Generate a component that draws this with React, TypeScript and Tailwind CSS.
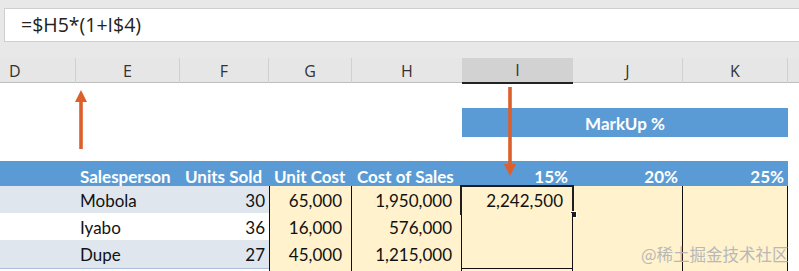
import React from "react";

const G = "grid grid-cols-[76px_104px_89px_83px_110px_111px_110px_105px_1fr]";

function DataRow({
  name,
  units,
  cost,
  sales,
  first,
  shade,
  h,
}: {
  name: string;
  units: string;
  cost: string;
  sales: string;
  first?: boolean;
  shade: boolean;
  h: string;
}) {
  const left = shade ? "bg-[#dfe6ee]" : "bg-white";
  const lb = "border-b border-[#aabfd5]";
  const yc = "bg-[#fff2cc] border-b border-r border-[#111]";
  return (
    <div className={`${G} ${h}`}>
      <div className={`${left} ${lb}`} />
      <div className={`${left} ${lb} flex items-center pl-[4px] pt-[2px]`}>{name}</div>
      <div className={`${left} ${lb} flex items-center justify-end pr-[4px] pt-[2px]`}>{units}</div>
      <div className={`${yc} border-l flex items-center justify-end pr-[9px] pt-[2px]`}>{cost}</div>
      <div className={`${yc} flex items-center justify-end pr-[9px] pt-[2px]`}>{sales}</div>
      <div className={`${yc} relative flex items-center justify-end pr-[9px] pt-[2px]`}>
        {first && (
          <>
            <span>2,242,500</span>
            <div className="absolute left-[-2px] top-[-1px] right-[-2px] bottom-[-1px] border-2 border-[#1e1e1e]" />
            <div className="absolute right-[-5px] bottom-[-4px] w-[7px] h-[7px] bg-[#1e1e1e] border border-white" />
          </>
        )}
      </div>
      <div className={yc} />
      <div className={yc} />
      <div className="bg-white" />
    </div>
  );
}

export default function App() {
  return (
    <div className="relative w-[799px] h-[271px] overflow-hidden bg-white text-[#111] font-['Lato',sans-serif] text-[17px]">
      {/* formula bar */}
      <div className="h-[58px] bg-[#e8e8e8] pt-[8px] pl-[4px]">
        <div className="h-[34px] bg-white border border-r-0 border-[#cfcfcf] flex items-center pl-[16px] text-[19.5px] text-[#222] font-['Open_Sans',sans-serif]">
          =$H5*(1+I$4)
        </div>
      </div>
      {/* column headers */}
      <div className={`${G} h-[25px] bg-[#e6e6e6] border-b border-[#bdbdbd] text-[16px] text-[#333] font-['Open_Sans',sans-serif]`}>
        <div className="border-r border-[#d0d0d0] flex items-center pl-[9px]">D</div>
        <div className="border-r border-[#d0d0d0] flex items-center justify-center">E</div>
        <div className="border-r border-[#d0d0d0] flex items-center justify-center">F</div>
        <div className="border-r border-[#d0d0d0] flex items-center justify-center">G</div>
        <div className="flex items-center justify-center">H</div>
        <div className="bg-[#d2d2d2] border-b-2 border-[#222] mb-[-1px] flex items-center justify-center">I</div>
        <div className="border-r border-[#d0d0d0] flex items-center justify-center">J</div>
        <div className="border-r border-[#d0d0d0] flex items-center justify-center">K</div>
        <div />
      </div>
      <div className="h-[25px]" />
      {/* markup band */}
      <div className={`${G} h-[27px]`}>
        <div className="col-start-6 col-span-3 bg-[#5b9bd5] text-white font-bold flex items-center justify-center pt-[3px]">
          MarkUp %
        </div>
      </div>
      <div className="h-[26px]" />
      {/* table header */}
      <div className={`${G} h-[25px] text-white font-bold`}>
        <div className="bg-[#5b9bd5]" />
        <div className="bg-[#5b9bd5] flex items-center pl-[4px] pt-[3px] whitespace-nowrap">Salesperson</div>
        <div className="bg-[#5b9bd5] flex items-center pl-[5px] pt-[3px] whitespace-nowrap">Units Sold</div>
        <div className="bg-[#5b9bd5] flex items-center pl-[5px] pt-[3px] whitespace-nowrap">Unit Cost</div>
        <div className="bg-[#5b9bd5] flex items-center pl-[5px] pt-[3px] whitespace-nowrap">Cost of Sales</div>
        <div className="bg-[#5b9bd5] flex items-center justify-end pr-[5px] pt-[3px]">15%</div>
        <div className="bg-[#5b9bd5] flex items-center justify-end pr-[5px] pt-[3px]">20%</div>
        <div className="bg-[#5b9bd5] flex items-center justify-end pr-[4px] pt-[3px]">25%</div>
        <div />
      </div>
      <DataRow name="Mobola" units="30" cost="65,000" sales="1,950,000" first shade h="h-[27px]" />
      <DataRow name="Iyabo" units="36" cost="16,000" sales="576,000" shade={false} h="h-[27px]" />
      <DataRow name="Dupe" units="27" cost="45,000" sales="1,215,000" shade h="h-[26px]" />
      <div className={`${G} h-[10px]`}>
        <div />
        <div />
        <div />
        <div className="bg-[#fff2cc] border-l border-r border-[#111]" />
        <div className="bg-[#fff2cc] border-r border-[#111]" />
        <div className="bg-[#fff2cc] border-r border-[#111]" />
        <div className="bg-[#fff2cc] border-r border-[#111]" />
        <div className="bg-[#fff2cc] border-r border-[#111]" />
        <div />
      </div>

      {/* up arrow */}
      <svg className="absolute left-[74px] top-[90px]" width="14" height="60" viewBox="0 0 14 60">
        <polygon points="7,0 13,12 1,12" fill="#dd5f2c" />
        <rect x="5.2" y="10" width="3.6" height="49" fill="#dd5f2c" />
      </svg>
      {/* down arrow */}
      <svg className="absolute left-[503px] top-[87px]" width="14" height="90" viewBox="0 0 14 90">
        <rect x="5.2" y="0" width="3.6" height="80" fill="#dd5f2c" />
        <polygon points="1,77 13,77 7,89" fill="#dd5f2c" />
      </svg>
      {/* watermark */}
      <div className="absolute left-[641px] top-[243px] text-[16.5px] leading-[22px] text-[#b8b8b8] font-['Noto_Sans_CJK_SC',sans-serif] whitespace-nowrap">
        @稀土掘金技术社区
      </div>
    </div>
  );
}
